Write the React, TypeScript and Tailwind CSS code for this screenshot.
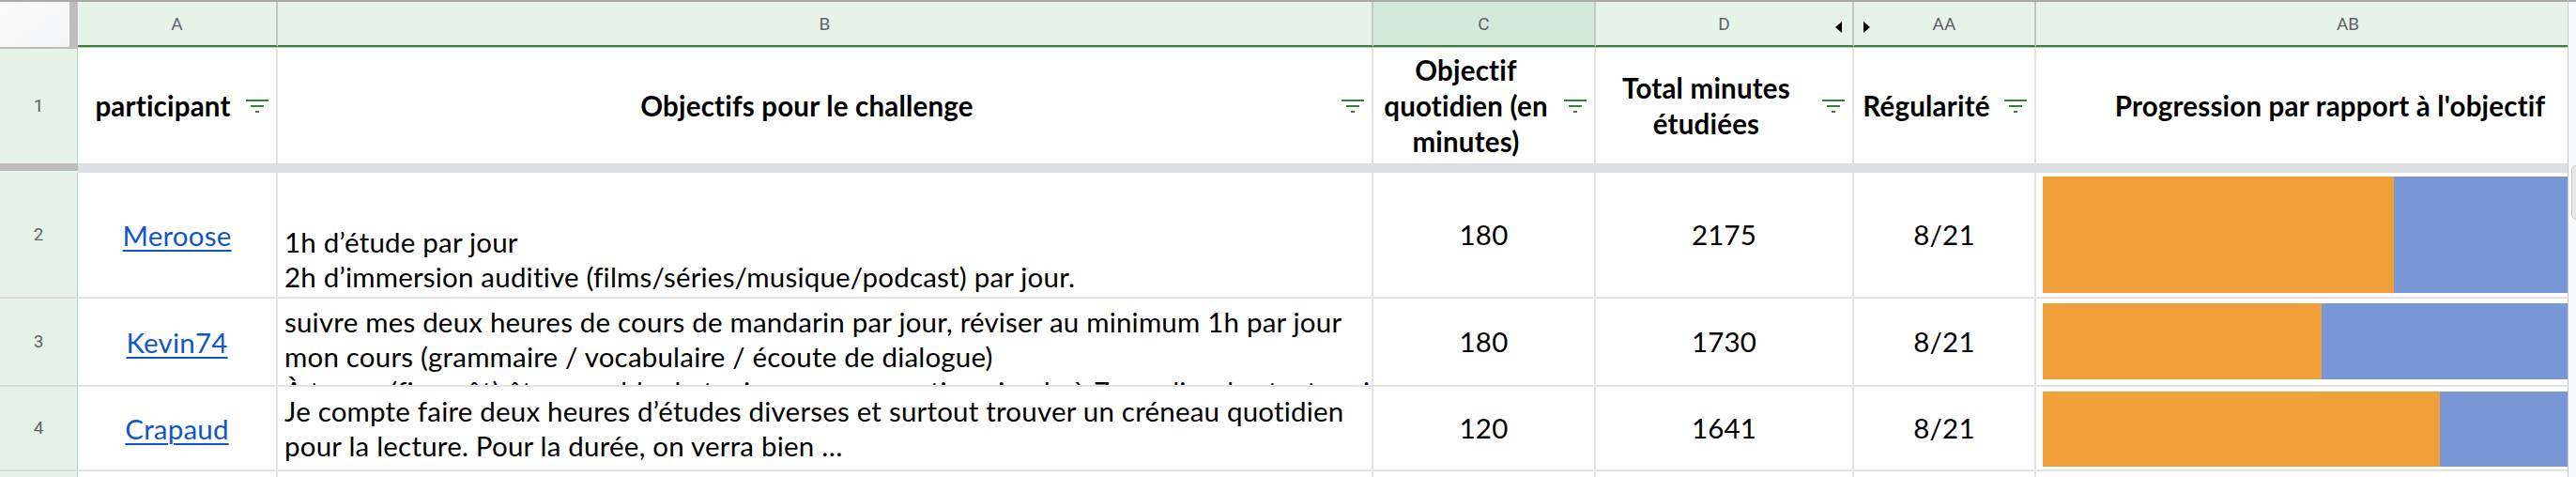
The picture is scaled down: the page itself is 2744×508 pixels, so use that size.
import React from "react";

const W = { rh: 83, A: 213, B: 1167, C: 237, D: 275, AA: 194, AB: 666 };

function FilterIcon() {
  return (
    <svg width="24" height="14" viewBox="0 0 24 14" className="shrink-0">
      <rect x="0" y="0" width="24" height="2" fill="#35803a" />
      <rect x="5" y="6" width="14" height="2" fill="#35803a" />
      <rect x="10" y="12" width="4" height="2" fill="#35803a" />
    </svg>
  );
}

function HeaderLetter({ w, label, dark, left, right }: { w: number; label: string; dark?: boolean; left?: boolean; right?: boolean }) {
  return (
    <div
      className={`relative flex h-[48px] shrink-0 items-center justify-center border-r-2 border-b-2 border-r-[#c4c7c5] border-b-[#35803a] ${dark ? "bg-[#d3e8d8]" : "bg-[#e6f3e8]"}`}
      style={{ width: w }}
    >
      <span className="pt-[3px] text-[19px] text-[#5f6368]" style={{ fontFamily: "Roboto, sans-serif" }}>{label}</span>
      {right && (
        <svg width="7" height="12" viewBox="0 0 7 12" className="absolute right-[11px] top-[21px]">
          <polygon points="7,0 7,12 0,6" fill="#000" />
        </svg>
      )}
      {left && (
        <svg width="7" height="12" viewBox="0 0 7 12" className="absolute left-[10px] top-[21px]">
          <polygon points="0,0 0,12 7,6" fill="#000" />
        </svg>
      )}
    </div>
  );
}

function HeadCell({ w, lines, shift }: { w: number; lines: string[]; shift?: string }) {
  return (
    <div className="flex h-full shrink-0 items-center border-r-2 border-[#e2e2e2] pr-[8px]" style={{ width: w }}>
      <div className={`flex-1 text-center font-bold leading-[38px] text-black ${shift ?? ""}`}>
        {lines.map((l, i) => (
          <div key={i} className="whitespace-nowrap">{l}</div>
        ))}
      </div>
      <div className="ml-[6px]">
        <FilterIcon />
      </div>
    </div>
  );
}

type Row = {
  n: string;
  h: string;
  name: string;
  lines: string[];
  align: string;
  obj: string;
  total: string;
  reg: string;
  frac: number;
  barPad: string;
};

const rows: Row[] = [
  {
    n: "2",
    h: "h-[134px]",
    name: "Meroose",
    lines: ["1h d’étude par jour", "2h d’immersion auditive (films/séries/musique/podcast) par jour."],
    align: "justify-end pb-[3px]",
    obj: "180",
    total: "2175",
    reg: "8/21",
    frac: 2175 / 3780,
    barPad: "pt-[4px] pb-[4px]",
  },
  {
    n: "3",
    h: "h-[94px]",
    name: "Kevin74",
    lines: [
      "suivre mes deux heures de cours de mandarin par jour, réviser au minimum 1h par jour",
      "mon cours (grammaire / vocabulaire / écoute de dialogue)",
      "À terme (fin août) être capable de tenir une conversation simple à 7 ans, lire des textes simples /",
    ],
    align: "justify-start pt-[6px]",
    obj: "180",
    total: "1730",
    reg: "8/21",
    frac: 1730 / 3780,
    barPad: "pt-[5px] pb-[6px]",
  },
  {
    n: "4",
    h: "h-[90px]",
    name: "Crapaud",
    lines: [
      "Je compte faire deux heures d’études diverses et surtout trouver un créneau quotidien",
      "pour la lecture. Pour la durée, on verra bien …",
    ],
    align: "justify-center",
    obj: "120",
    total: "1641",
    reg: "8/21",
    frac: 1641 / 2520,
    barPad: "pt-[5px] pb-[3px]",
  },
];

export default function App() {
  return (
    <div className="relative flex h-[508px] w-[2744px] overflow-hidden bg-white" style={{ fontFamily: "Lato, 'Open Sans', sans-serif" }}>
      <div className="flex w-[2735px] shrink-0 flex-col overflow-hidden">
        <div className="h-[2px] w-[2835px] shrink-0 bg-[#a9a9a9]" />
        {/* column letters */}
        <div className="flex h-[48px] w-[2835px] shrink-0">
          <div className="h-full w-[74px] shrink-0 bg-gradient-to-br from-[#fbfbfc] to-[#f3f4f5]" />
          <div className="h-full w-[8px] shrink-0 bg-[#bdbdbd]" />
          <div className="h-full w-[1px] shrink-0 bg-[#c4c7c5]" />
          <HeaderLetter w={W.A} label="A" />
          <HeaderLetter w={W.B} label="B" />
          <HeaderLetter w={W.C} label="C" dark />
          <HeaderLetter w={W.D} label="D" right />
          <HeaderLetter w={W.AA} label="AA" left />
          <HeaderLetter w={W.AB} label="AB" />
        </div>
        <div className="flex h-[2px] w-[2835px] shrink-0">
          <div className="h-full w-[82px] shrink-0 bg-[#bdbdbd]" />
          <div className="h-full w-[1px] shrink-0 bg-[#c4c7c5]" />
          <div className="flex flex-1 flex-col">
            <div className="h-[1px] bg-[#c4c7c5]" />
            <div className="h-[1px] bg-white" />
          </div>
        </div>
        {/* row 1 */}
        <div className="flex h-[122px] w-[2835px] shrink-0 text-[29.5px] tracking-[0.2px]">
          <div className="flex h-full w-[83px] shrink-0 items-center justify-center border-r border-[#c4c7c5] bg-[#e6f3e8]">
            <span className="text-[19px] tracking-normal text-[#5f6368]" style={{ fontFamily: "Roboto, sans-serif" }}>1</span>
          </div>
          <HeadCell w={W.A} lines={["participant"]} shift="pl-[8px]" />
          <HeadCell w={W.B} lines={["Objectifs pour le challenge"]} />
          <HeadCell w={W.C} lines={["Objectif", "quotidien (en", "minutes)"]} />
          <HeadCell w={W.D} lines={["Total minutes", "étudiées"]} />
          <HeadCell w={W.AA} lines={["Régularité"]} />
          <HeadCell w={W.AB} lines={["Progression par rapport à l'objectif"]} />
        </div>
        {/* freeze bar */}
        <div className="flex h-[10px] w-[2835px] shrink-0">
          <div className="flex w-[83px] shrink-0 flex-col">
            <div className="h-[8px] bg-[#bdbdbd]" />
            <div className="h-[2px] bg-[#e6f3e8]" />
          </div>
          <div className="flex-1 bg-[#dcdfe4]" />
        </div>
        {rows.map((r) => (
          <div key={r.n} className={`flex ${r.h} w-[2835px] shrink-0 text-[29.5px] tracking-[0.2px] text-black`}>
            <div className="flex h-full w-[83px] shrink-0 items-center justify-center border-r border-b-2 border-r-[#c4c7c5] border-b-[#d6d8d6] bg-[#e6f3e8]">
              <span className="text-[19px] tracking-normal text-[#5f6368]" style={{ fontFamily: "Roboto, sans-serif" }}>{r.n}</span>
            </div>
            <div className="flex h-full shrink-0 items-center justify-center border-r-2 border-b-2 border-[#e2e2e2]" style={{ width: W.A }}>
              <a className="leading-[37px] text-[#1155cc] underline decoration-[2px] underline-offset-[4px]" href="#">{r.name}</a>
            </div>
            <div className={`flex h-full shrink-0 flex-col overflow-hidden border-r-2 border-b-2 border-[#e2e2e2] pl-[7px] ${r.align}`} style={{ width: W.B }}>
              {r.lines.map((l, i) => (
                <div key={i} className="shrink-0 whitespace-nowrap leading-[37px]">{l}</div>
              ))}
            </div>
            <div className="flex h-full shrink-0 items-center justify-center border-r-2 border-b-2 border-[#e2e2e2]" style={{ width: W.C }}>
              {r.obj}
            </div>
            <div className="flex h-full shrink-0 items-center justify-center border-r-2 border-b-2 border-[#e2e2e2]" style={{ width: W.D }}>
              {r.total}
            </div>
            <div className="flex h-full shrink-0 items-center justify-center border-r-2 border-b-2 border-[#e2e2e2]" style={{ width: W.AA }}>
              {r.reg}
            </div>
            <div className={`flex h-full shrink-0 border-r-2 border-b-2 border-[#e2e2e2] pl-[7px] pr-[7px] ${r.barPad}`} style={{ width: W.AB }}>
              <div className="flex h-full w-full">
                <div className="h-full bg-[#f09f3a]" style={{ width: `${r.frac * 100}%` }} />
                <div className="h-full flex-1 bg-[#7996d7]" />
              </div>
            </div>
          </div>
        ))}
        {/* row 5 partial */}
        <div className="flex h-[20px] w-[2835px] shrink-0">
          <div className="h-full w-[83px] shrink-0 border-r border-[#c4c7c5] bg-[#e6f3e8]" />
          <div className="h-full shrink-0 border-r-2 border-[#e2e2e2]" style={{ width: W.A }} />
          <div className="h-full shrink-0 border-r-2 border-[#e2e2e2]" style={{ width: W.B }} />
          <div className="h-full shrink-0 border-r-2 border-[#e2e2e2]" style={{ width: W.C }} />
          <div className="h-full shrink-0 border-r-2 border-[#e2e2e2]" style={{ width: W.D }} />
          <div className="h-full shrink-0 border-r-2 border-[#e2e2e2]" style={{ width: W.AA }} />
          <div className="h-full shrink-0 border-r-2 border-[#e2e2e2]" style={{ width: W.AB }} />
        </div>
      </div>
      {/* scrollbar strip */}
      <div className="relative flex h-full w-[9px] shrink-0 flex-col border-l border-[#c8c8c8] bg-[#f8f9fa]">
        <div className="h-[2px] bg-[#a9a9a9]" />
        <div className="absolute left-[3px] top-[176px] h-[58px] w-[10px] rounded-[5px] border border-[#c8c8c8] bg-[#e8e8e8]" />
      </div>
    </div>
  );
}
